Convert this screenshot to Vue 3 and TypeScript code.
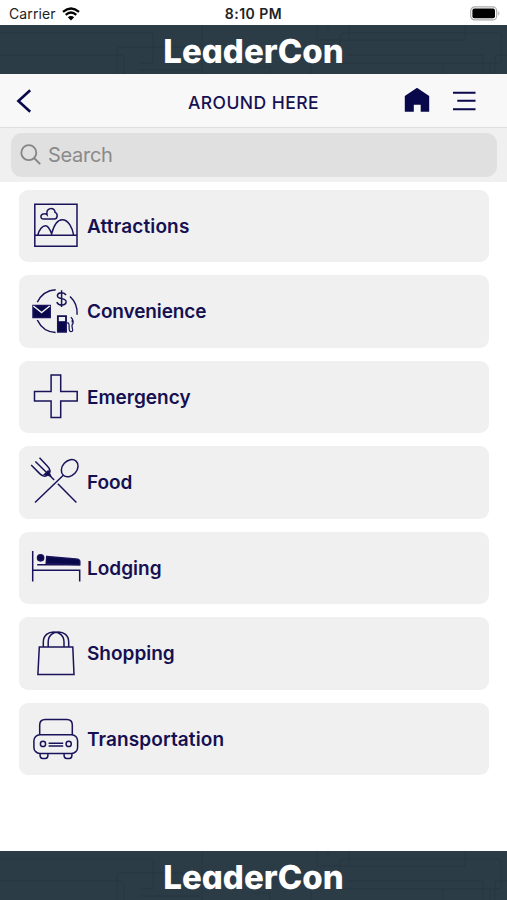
<script setup lang="ts">
import { ref } from 'vue'

interface Category {
  id: string
  label: string
  spacing: string
}

const query = ref('')

const categories: Category[] = [
  { id: 'attractions', label: 'Attractions', spacing: '0.15px' },
  { id: 'convenience', label: 'Convenience', spacing: '-0.12px' },
  { id: 'emergency', label: 'Emergency', spacing: '0px' },
  { id: 'food', label: 'Food', spacing: '-0.1px' },
  { id: 'lodging', label: 'Lodging', spacing: '0px' },
  { id: 'shopping', label: 'Shopping', spacing: '0px' },
  { id: 'transportation', label: 'Transportation', spacing: '0.1px' },
]

const circuit: string =
  'M0 8H153V38H140M0 30H121Q124 30 124 33V49M117 49V25Q117 22 120 22H200M140 45H200M202 0V49' +
  'M317 0V15H465V0M328 0V4M349 0V15M340 22V11Q340 8 343 8H498Q501 8 501 11V35Q501 38 498 38H340' +
  'M348 30H483V49M495 49V32Q495 30 498 30H507M443 49V38M311 38V49M490 38V49M253 42H270V49'
</script>

<template>
  <main class="app">
    <div class="status">
      <div class="carrier">
        <span>Carrier</span>
        <svg width="18" height="14" viewBox="0 0 18 14">
          <path d="M1 4.8Q9-1.9 17 4.8M3.7 7.8Q9 3.3 14.3 7.8" fill="none" stroke="#000" stroke-width="2.3" />
          <path d="M9 13.6L5.8 10.3Q9 7.7 12.2 10.3Z" />
        </svg>
      </div>
      <span class="time">8:10 PM</span>
      <svg class="battery" width="31" height="15" viewBox="0 0 31 15">
        <rect x=".7" y=".9" width="26" height="13" rx="4" fill="#fff" stroke="#aaa" stroke-width="1.2" />
        <rect x="2.4" y="2.6" width="22.6" height="9.6" rx="2" />
        <path d="M28.3 5Q30.6 7.4 28.3 9.8Z" fill="#aaa" />
      </svg>
    </div>

    <header class="banner">
      <svg class="circuit" viewBox="0 0 507 49"><path :d="circuit" /></svg>
      <span class="logo">LeaderCon</span>
    </header>

    <nav class="nav">
      <button class="back" aria-label="Back">
        <svg width="16" height="24" viewBox="0 0 16 24"><path d="M14.2 1.2L2.4 12L14.2 22.8" /></svg>
      </button>
      <h1>AROUND HERE</h1>
      <div class="actions">
        <svg width="26" height="25" viewBox="0 0 26 25"><path d="M.8 8L13 -.2L25.2 8V23.7H16.7V16.8H9.8V23.7H.8Z" fill="#08084a" /></svg>
        <svg width="23" height="20" viewBox="0 0 23 20"><path d="M0 1.7H22.5M4.3 9.8H22.5M0 18.2H22.5" stroke="#08084a" stroke-width="2.1" /></svg>
      </div>
    </nav>

    <div class="searchbar">
      <label class="search">
        <svg width="22" height="22" viewBox="0 0 22 22"><circle cx="8.8" cy="8.7" r="7.5" /><path d="M14 14L20.2 20.2" /></svg>
        <input v-model="query" type="text" placeholder="Search" />
      </label>
    </div>

    <ul class="list">
      <li v-for="item in categories" :key="item.id" class="card">
        <svg class="icon" width="68" height="73" viewBox="0 0 68 73">
          <g v-if="item.id === 'attractions'">
            <path d="M15.8 15.2H58V57.3H15.8ZM15.8 46.3H58M18.7 46.3C20.2 40.5 23.5 36.7 26.5 36.7C29.3 36.7 31.2 41 32.6 44.7C35 36.2 38.5 30.8 43.2 30.8C49.5 30.8 53.6 39 54.7 46.3" />
            <path d="M24.5 30C20.9 30 20.9 24.8 25.5 24.7C26.7 24.6 27.3 25 28 25.7C26.7 18.8 35.5 17.2 36.1 23.4C39.2 24.6 38.7 30 35.3 30Z" />
          </g>
          <g v-else-if="item.id === 'convenience'">
            <path d="M18.3 27.3C21.9 19.8 28 15.2 36.7 14.7M51 21.5C56.3 26.4 58.6 32.3 58.1 39.7M18.3 45C21.9 52.5 28 57.1 36.6 57.5" />
            <path class="solid" d="M14 30.5H31.2V42.4H14Z" />
            <path class="cut" d="M14.4 31L22.6 37.6L30.8 31" />
            <path d="M47 20C45 16.6 38.6 17 38.4 20.6C38.2 25.2 47.3 22 47.1 26.9C46.8 31 39.6 31.2 37.8 27.1M42.6 15.3V31.9" />
            <path class="solid" d="M38.7 57V40.9H47.2V57Z" />
            <path class="window" d="M39.8 42H46.1V46.2H39.8Z" />
            <path class="hose" d="M47.8 48C52.4 46.6 48 56.6 52 56.6C56.3 56.6 50.7 50.8 54 48.6C54.5 46.5 54.2 44.5 51.8 42.2M53.2 43.6V47.5" />
          </g>
          <g v-else-if="item.id === 'emergency'">
            <path d="M32.1 15H41.7V31.5H58.2V41H41.7V57.4H32.1V41H15.5V31.5H32.1Z" />
          </g>
          <g v-else-if="item.id === 'food'">
            <path d="M12.2 19L20.7 27.6Q25.4 32.3 29.2 28.5Q33 24.7 28.5 20.2L20.5 11.7M16.4 15.5L35.2 34M38.8 37.7L57.4 56.5M16 56.5L44.6 29" />
            <path class="solid" d="M25.5 28.6L29.1 25L31.5 29.7Z" />
            <ellipse cx="50.7" cy="22.2" rx="7.3" ry="9.5" transform="rotate(42 50.7 22.2)" />
          </g>
          <g v-else-if="item.id === 'lodging'">
            <path d="M13.7 20V50.5M18.2 33.8H61M13.7 39.2H60.7V50.5" />
            <circle class="solid" cx="21.6" cy="26.8" r="3.1" />
            <path class="solid" d="M27.8 25.4L56.8 28.1Q60.8 28.5 60.8 30.5V33.8L27.2 32.5Z" />
          </g>
          <g v-else-if="item.id === 'shopping'">
            <path d="M20.3 30H53.8L55 57.5H18.9Z" />
            <path d="M24.3 30V25C24.3 11.5 45 11.5 45 25V30M29.2 30V25C29.2 11.5 49.7 11.5 49.7 25V30" />
          </g>
          <g v-else>
            <path d="M20.7 32.8V23Q20.7 17.5 26.2 17.5H47.8Q53.3 17.5 53.3 23V32.8" />
            <rect x="14.9" y="32.8" width="43.7" height="18.6" rx="6" />
            <circle cx="24" cy="41.9" r="2.6" /><circle cx="49.7" cy="41.9" r="2.6" />
            <path d="M29.6 41.2H44.2M29.6 43.9H44.2M21.1 51.4V53.5Q21.1 56.4 23.7 56.4H26.3Q28.9 56.4 28.9 53.5V51.4M45.1 51.4V53.5Q45.1 56.4 47.7 56.4H50.3Q52.9 56.4 52.9 53.5V51.4" />
          </g>
        </svg>
        <span class="label" :style="{ letterSpacing: item.spacing }">{{ item.label }}</span>
      </li>
    </ul>

    <footer class="banner">
      <svg class="circuit" viewBox="0 0 507 49"><path :d="circuit" /></svg>
      <span class="logo">LeaderCon</span>
    </footer>
  </main>
</template>

<style>
body {
  margin: 0;
  background: #fff;
}
</style>

<style scoped>
.app {
  width: 507px;
  height: 900px;
  display: flex;
  flex-direction: column;
  background: #fff;
  font-family: Inter, 'Liberation Sans', sans-serif;
  overflow: hidden;
}
.status {
  height: 25px;
  flex: none;
  display: grid;
  grid-template-columns: 1fr auto 1fr;
  align-items: center;
  padding: 2px 6px 0 9px;
  box-sizing: border-box;
  color: #222;
}
.carrier {
  display: flex;
  align-items: center;
  gap: 6px;
  font-size: 14px;
  letter-spacing: 0.1px;
}
.time {
  margin-right: 3px;
  font-size: 14px;
  font-weight: 600;
  letter-spacing: 0.5px;
}
.battery {
  justify-self: end;
}
.banner {
  height: 49px;
  flex: none;
  display: grid;
  place-items: center;
  background: #2c3c47;
  overflow: hidden;
}
.banner > * {
  grid-area: 1 / 1;
}
.circuit {
  width: 507px;
  height: 49px;
  fill: none;
  stroke: #263640;
  stroke-width: 1;
}
.logo {
  padding-top: 3px;
  color: #fff;
  font-size: 33px;
  line-height: 46px;
  font-weight: 800;
  letter-spacing: 0.05px;
  font-feature-settings: 'cv11';
  text-rendering: geometricPrecision;
}
.nav {
  height: 54px;
  flex: none;
  box-sizing: border-box;
  display: grid;
  grid-template-columns: 1fr auto 1fr;
  align-items: center;
  padding: 0 16px;
  background: #f8f8f8;
  border-bottom: 1px solid #dedede;
}
.back {
  border: 0;
  padding: 0;
  width: 16px;
  height: 24px;
  background: none;
}
.back svg {
  display: block;
  fill: none;
  stroke: #08084a;
  stroke-width: 2.6;
}
h1 {
  margin: 3px 0 0;
  font-size: 17.5px;
  font-weight: 500;
  letter-spacing: 0.45px;
  color: #161052;
}
.actions {
  display: flex;
  justify-content: flex-end;
  align-items: center;
  gap: 23px;
  margin-right: 15px;
}
.searchbar {
  height: 54px;
  flex: none;
  box-sizing: border-box;
  padding: 5px 10px 5px 11px;
  background: #f0f0f0;
}
.search {
  height: 44px;
  display: flex;
  align-items: center;
  gap: 6px;
  padding-left: 9px;
  background: #e0e0e0;
  border-radius: 11px;
}
.search svg {
  fill: none;
  stroke: #858585;
  stroke-width: 1.8;
}
.search input {
  flex: 1;
  border: 0;
  padding: 0;
  outline: 0;
  background: none;
  font: 400 20px Inter, 'Liberation Sans', sans-serif;
  letter-spacing: -0.3px;
}
.search input::placeholder {
  color: #8a8a8a;
  opacity: 1;
}
.list {
  flex: 1;
  margin: 0;
  padding: 7.6px 18.5px 0 19px;
  list-style: none;
  display: flex;
  flex-direction: column;
  gap: 13px;
}
.card {
  height: 72.5px;
  flex: none;
  display: flex;
  align-items: center;
  background: #f0f0f0;
  border-radius: 9px;
}
.icon {
  flex: none;
  fill: none;
  stroke: #19135a;
  stroke-width: 1.5;
}
.solid {
  fill: #08084a;
}
.cut {
  stroke: #f0f0f0;
}
.window {
  fill: #f0f0f0;
  stroke: none;
}
.hose {
  stroke-width: 1.2;
}
.label {
  padding-top: 1px;
  font-size: 19px;
  font-weight: 600;
  color: #161052;
}
</style>
